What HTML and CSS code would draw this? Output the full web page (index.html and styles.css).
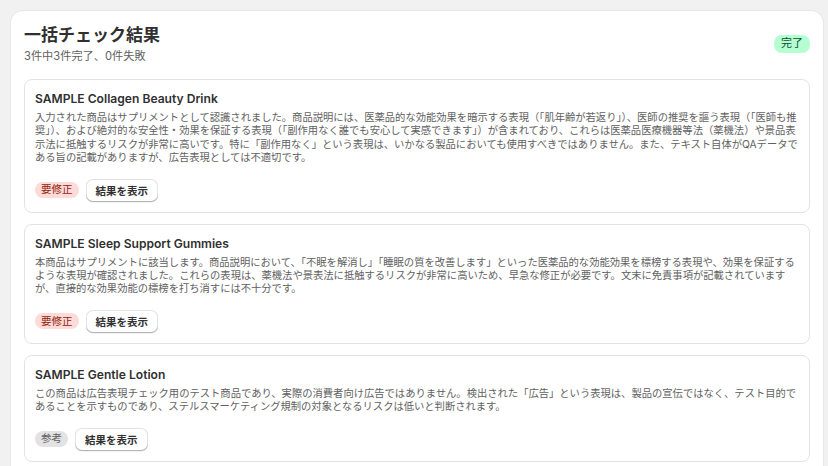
FILE: index.html
```html
<!DOCTYPE html>
<html lang="ja">
<head>
  <meta charset="UTF-8">
  <meta name="viewport" content="width=device-width,initial-scale=1">
  <title>一括チェック結果</title>
  <link rel="stylesheet" href="styles.css">
</head>
<body>
  <div class="panel">
    <header class="panel-head">
      <div>
        <h1>一括チェック結果</h1>
        <p class="summary">3件中3件完了、0件失敗</p>
      </div>
      <span class="badge badge-done">完了</span>
    </header>

    <div class="results">
      <section class="result">
        <h2>SAMPLE Collagen Beauty Drink</h2>
        <p>入力された商品はサプリメントとして認識されました。商品説明には、医薬品的な効能効果を暗示する表現（「肌年齢が若返り」）、医師の推奨を謳う表現（「医師も推奨」）、および絶対的な安全性・効果を保証する表現（「副作用なく誰でも安心して実感できます」）が含まれており、これらは医薬品医療機器等法（薬機法）や景品表示法に抵触するリスクが非常に高いです。特に「副作用なく」という表現は、いかなる製品においても使用すべきではありません。また、テキスト自体がQAデータである旨の記載がありますが、広告表現としては不適切です。</p>
        <div class="actions">
          <span class="badge badge-fix">要修正</span>
          <button class="btn">結果を表示</button>
        </div>
      </section>

      <section class="result">
        <h2>SAMPLE Sleep Support Gummies</h2>
        <p>本商品はサプリメントに該当します。商品説明において、「不眠を解消し」「睡眠の質を改善します」といった医薬品的な効能効果を標榜する表現や、効果を保証するような表現が確認されました。これらの表現は、薬機法や景表法に抵触するリスクが非常に高いため、早急な修正が必要です。文末に免責事項が記載されていますが、直接的な効果効能の標榜を打ち消すには不十分です。</p>
        <div class="actions">
          <span class="badge badge-fix">要修正</span>
          <button class="btn">結果を表示</button>
        </div>
      </section>

      <section class="result">
        <h2>SAMPLE Gentle Lotion</h2>
        <p>この商品は広告表現チェック用のテスト商品であり、実際の消費者向け広告ではありません。検出された「広告」という表現は、製品の宣伝ではなく、テスト目的であることを示すものであり、ステルスマーケティング規制の対象となるリスクは低いと判断されます。</p>
        <div class="actions">
          <span class="badge badge-info">参考</span>
          <button class="btn">結果を表示</button>
        </div>
      </section>
    </div>
  </div>
</body>
</html>
```

FILE: styles.css
```css
* { box-sizing: border-box; margin: 0; padding: 0; }
body {
  font: 10.5px/13.4px Inter, "Noto Sans CJK JP", sans-serif;
  color: #303030;
  background: #f1f1f1;
  padding: 11px 5px 0 11px;
}
.panel {
  background: #fff;
  border-radius: 12px;
  padding: 13px 13px 20px;
  box-shadow: 0 0 0 1px rgba(0,0,0,0.04), 0 1px 0 rgba(0,0,0,0.07);
}
.panel-head {
  display: flex;
  justify-content: space-between;
  align-items: center;
  margin-bottom: 15px;
}
.panel-head h1 {
  font-size: 17px;
  line-height: 22px;
  font-weight: 700;
  color: #303030;
}
.summary {
  margin-top: 3px;
  font-size: 11.2px;
  line-height: 15px;
  color: #616161;
}
.results {
  display: flex;
  flex-direction: column;
  gap: 11px;
}
.result {
  border: 1px solid #e3e3e3;
  border-radius: 8px;
  padding: 10px;
}
.result h2 {
  font-size: 12.1px;
  line-height: 17px;
  font-weight: 600;
  color: #303030;
  margin-bottom: 4px;
}
.result p {
  font-size: 10.3px;
  line-height: 13.4px;
  color: #616161;
}
.actions {
  display: flex;
  align-items: center;
  gap: 7px;
  margin-top: 14px;
}
.badge {
  display: inline-flex;
  align-items: center;
  height: 16px;
  padding: 0 6px;
  border-radius: 8px;
  font-size: 10.5px;
}
.badge-done {
  height: 18px;
  padding: 0 7px;
  font-size: 11px;
  background: #b4fed2;
  color: #0c5132;
}
.badge-fix { background: #fedad9; color: #8e1f0b; }
.badge-info { background: #e3e3e3; color: #616161; }
.btn {
  height: 23px;
  padding: 0 10px;
  font: 600 10.5px Inter, "Noto Sans CJK JP", sans-serif;
  color: #303030;
  background: #fff;
  border: none;
  border-radius: 7px;
  box-shadow: inset 0 -1px 0 #b5b5b5, inset 0 0 0 1px #e3e3e3, 0 1px 0 rgba(0,0,0,0.05);
  cursor: pointer;
}
```
